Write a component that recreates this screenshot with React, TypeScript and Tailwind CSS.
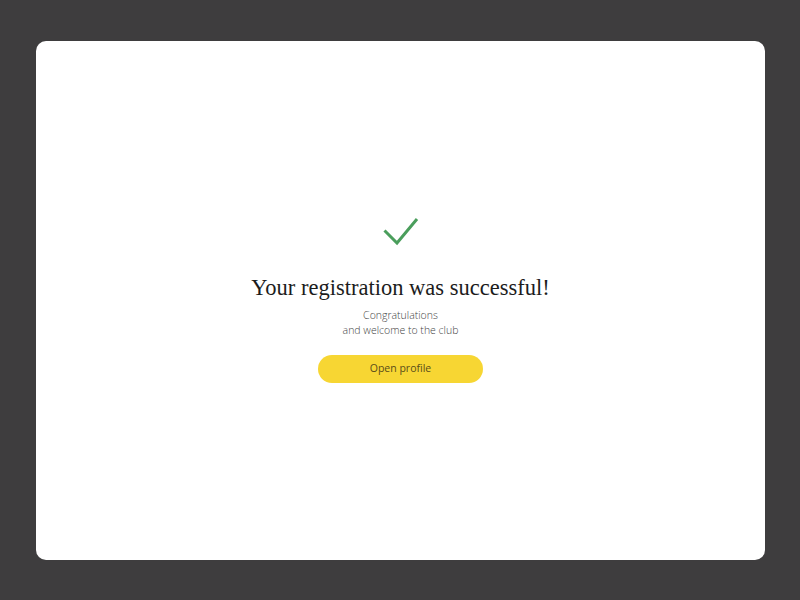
export default function App() {
  return (
    <div className="w-[800px] h-[600px] bg-[#3e3d3e] pt-[41px] pl-[36px]">
      <div className="w-[729px] h-[519px] bg-white rounded-[10px] flex flex-col items-center pt-[174px]">
        <svg width="40" height="34" viewBox="0 0 40 34" fill="none">
          <path d="M3.5 15.5 L16 28 L36 4" stroke="#4a9e5c" strokeWidth="3" strokeLinecap="butt" strokeLinejoin="miter" />
        </svg>
        <h1 className="mt-[25px] font-['Liberation_Serif',serif] text-[22.5px] leading-[28px] text-[#1c1c1c]">
          Your registration was successful!
        </h1>
        <p className="mt-[6px] font-['Open_Sans',sans-serif] font-light text-[10.5px] leading-[15px] text-[#444] text-center">
          Congratulations
          <br />
          and welcome to the club
        </p>
        <button className="mt-[17px] w-[165px] h-[28px] rounded-full bg-[#f7d633] font-['Open_Sans',sans-serif] text-[10.5px] text-[#5a4d1a]">
          Open profile
        </button>
      </div>
    </div>
  )
}
